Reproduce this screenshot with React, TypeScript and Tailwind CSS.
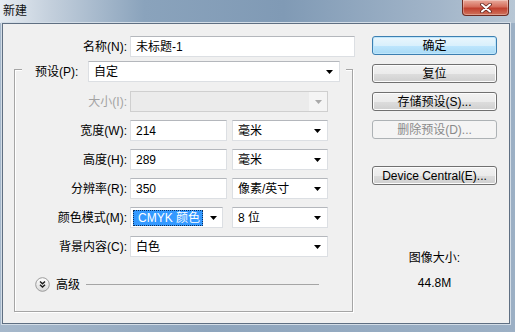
import React from 'react';

function Caret({ color = '#000' }: { color?: string }) {
  return (
    <svg width="7" height="4" viewBox="0 0 7 4" className="shrink-0">
      <path d="M0 0H7L3.5 4Z" fill={color} />
    </svg>
  );
}

function Field({ children, className = '' }: { children?: React.ReactNode; className?: string }) {
  return (
    <div
      className={`flex h-[21px] items-center border border-[#dcdfe3] border-t-[#b4b7bc] bg-white pl-[5px] ${className}`}
    >
      {children}
    </div>
  );
}

function Dropdown({ value, className = '' }: { value: string; className?: string }) {
  return (
    <div
      className={`flex h-[21px] items-center justify-between border border-[#dcdfe3] border-t-[#b4b7bc] bg-white pl-[5px] pr-[6px] ${className}`}
    >
      <span>{value}</span>
      <Caret />
    </div>
  );
}

function Button({
  children,
  primary = false,
  disabled = false,
  className = '',
}: {
  children: React.ReactNode;
  primary?: boolean;
  disabled?: boolean;
  className?: string;
}) {
  const skin = disabled
    ? 'border-[#adb2b5] bg-[#f4f4f4] text-[#8a8a8a]'
    : primary
      ? 'border-[#3c7fb1] bg-[linear-gradient(#eaf6fd_0%,#d9f0fc_50%,#bee6fd_51%,#a9daf5_100%)] shadow-[inset_0_0_0_1px_#bfe6fb]'
      : 'border-[#707070] bg-[linear-gradient(#f2f2f2_0%,#ebebeb_50%,#dddddd_51%,#cfcfcf_100%)] shadow-[inset_0_0_0_1px_#fcfcfc]';
  return (
    <div className={`flex h-[19px] items-center justify-center rounded-[3px] border ${skin} ${className}`}>
      {children}
    </div>
  );
}

function Row({ label, children, muted = false }: { label: string; children: React.ReactNode; muted?: boolean }) {
  return (
    <div className="flex items-center">
      <div className={`w-[112px] text-right ${muted ? 'text-[#a3a3a3]' : ''}`}>{label}</div>
      <div className="ml-[3px] flex items-center">{children}</div>
    </div>
  );
}

export default function App() {
  return (
    <div className="flex h-[332px] w-[515px] flex-col overflow-hidden bg-[linear-gradient(to_right,#a6b8cb,#8ea5bd_40%,#9cb0c5)] font-['Liberation_Sans','Noto_Sans_CJK_SC',sans-serif] text-[12px] leading-[14px] text-black">
      {/* Title bar */}
      <div className="flex h-[23px] shrink-0 items-start justify-between bg-[linear-gradient(to_right,#e6ecf2_0%,#c3cfdc_10%,#8aa3bc_28%,#809ab5_55%,#a2b5c9_85%,#b8c7d5_100%)] pl-[3px] pr-[6px]">
        <span className="mt-[4px] text-[#111]">新建</span>
        <div className="flex h-[16px] w-[47px] items-center justify-center rounded-b-[4px] border border-t-0 border-[#6e2b22] bg-[linear-gradient(#e9ab9d,#d56d5c_45%,#c0402f_55%,#d0735c)] shadow-[inset_0_0_0_1px_rgba(255,255,255,0.3)]">
          <svg width="12" height="10" viewBox="0 0 12 10">
            <path d="M2 1.5L10 8.5M10 1.5L2 8.5" stroke="#5a1f18" strokeWidth="3.6" strokeLinecap="round" />
            <path d="M2 1.5L10 8.5M10 1.5L2 8.5" stroke="#fff" strokeWidth="2.1" strokeLinecap="round" />
          </svg>
        </div>
      </div>

      {/* Dialog body */}
      <div className="flex flex-1 pb-[8px] pl-[2px] pr-[5px]">
        <div className="flex flex-1 border border-[#5f6f82] bg-[#f0f0f0] shadow-[0_0_0_1px_#d3dde7]">
          {/* Left: form */}
          <div className="w-[369px] pt-[12px]">
            <div className="flex items-center">
              <div className="w-[124px] text-right">名称(N):</div>
              <Field className="ml-[3px] w-[225px]">未标题-1</Field>
            </div>

            <div className="ml-[11px] mt-[12px] w-[339px] border border-[#a5a5a5] pb-[19px] shadow-[1px_1px_0_#fff,inset_1px_1px_0_#fff]">
              {/* Group header (preset) */}
              <div className="-mt-[9px] ml-[7px] mr-[6px] flex items-center justify-between bg-[#f0f0f0] pl-[13px] pr-[6px]">
                <span>预设(P):</span>
                <Dropdown value="自定" className="w-[252px]" />
              </div>

              <div className="mt-[9px] flex flex-col gap-[8px]">
                <Row label="大小(I):" muted>
                  <div className="flex h-[21px] w-[198px] border border-[#cfcfcf] bg-[#ebebeb]">
                    <div className="flex-1" />
                    <div className="flex w-[18px] items-center justify-center bg-[#f4f4f4]">
                      <Caret color="#a9a9a9" />
                    </div>
                  </div>
                </Row>
                <Row label="宽度(W):">
                  <Field className="w-[97px]">214</Field>
                  <Dropdown value="毫米" className="ml-[5px] w-[96px]" />
                </Row>
                <Row label="高度(H):">
                  <Field className="w-[97px]">289</Field>
                  <Dropdown value="毫米" className="ml-[5px] w-[96px]" />
                </Row>
                <Row label="分辨率(R):">
                  <Field className="w-[97px]">350</Field>
                  <Dropdown value="像素/英寸" className="ml-[5px] w-[96px]" />
                </Row>
                <Row label="颜色模式(M):">
                  <div className="flex h-[21px] w-[93px] items-center border border-[#dcdfe3] border-t-[#b4b7bc] bg-white pl-[2px] pr-[5px]">
                    <span className="flex h-[16px] w-[70px] items-center border border-dotted border-[#0b2e5c] bg-[#3399ff] pl-[4px] text-white">
                      CMYK 颜色
                    </span>
                    <span className="ml-auto">
                      <Caret />
                    </span>
                  </div>
                  <Dropdown value="8 位" className="ml-[9px] w-[96px]" />
                </Row>
                <Row label="背景内容(C):">
                  <Dropdown value="白色" className="w-[198px]" />
                </Row>
              </div>

              {/* Advanced */}
              <div className="ml-[20px] mr-[33px] mt-[20px] flex items-center">
                <svg width="15" height="15" viewBox="0 0 15 15" className="shrink-0">
                  <defs>
                    <linearGradient id="adv" x1="0" y1="0" x2="0" y2="1">
                      <stop offset="0" stopColor="#ffffff" />
                      <stop offset="1" stopColor="#d9d9d9" />
                    </linearGradient>
                  </defs>
                  <circle cx="7.5" cy="7.5" r="6.8" fill="url(#adv)" stroke="#9a9a9a" />
                  <path d="M5 4.5L7.5 6.8L10 4.5M5 7.8L7.5 10.1L10 7.8" fill="none" stroke="#1a1a1a" strokeWidth="1.4" />
                </svg>
                <span className="ml-[6px]">高级</span>
                <div className="ml-[6px] h-[2px] flex-1 border-t border-[#a5a5a5] border-b-white" />
              </div>
            </div>
          </div>

          {/* Right: buttons */}
          <div className="flex w-[125px] flex-col pt-[12px]">
            <Button primary>确定</Button>
            <Button className="mt-[9px]">复位</Button>
            <Button className="mt-[9px]">存储预设(S)...</Button>
            <Button disabled className="mt-[9px]">
              删除预设(D)...
            </Button>
            <Button className="mt-[27px]">Device Central(E)...</Button>
            <div className="mt-[66px] text-center">图像大小:</div>
            <div className="mt-[11px] text-center">44.8M</div>
          </div>
        </div>
      </div>
    </div>
  );
}
